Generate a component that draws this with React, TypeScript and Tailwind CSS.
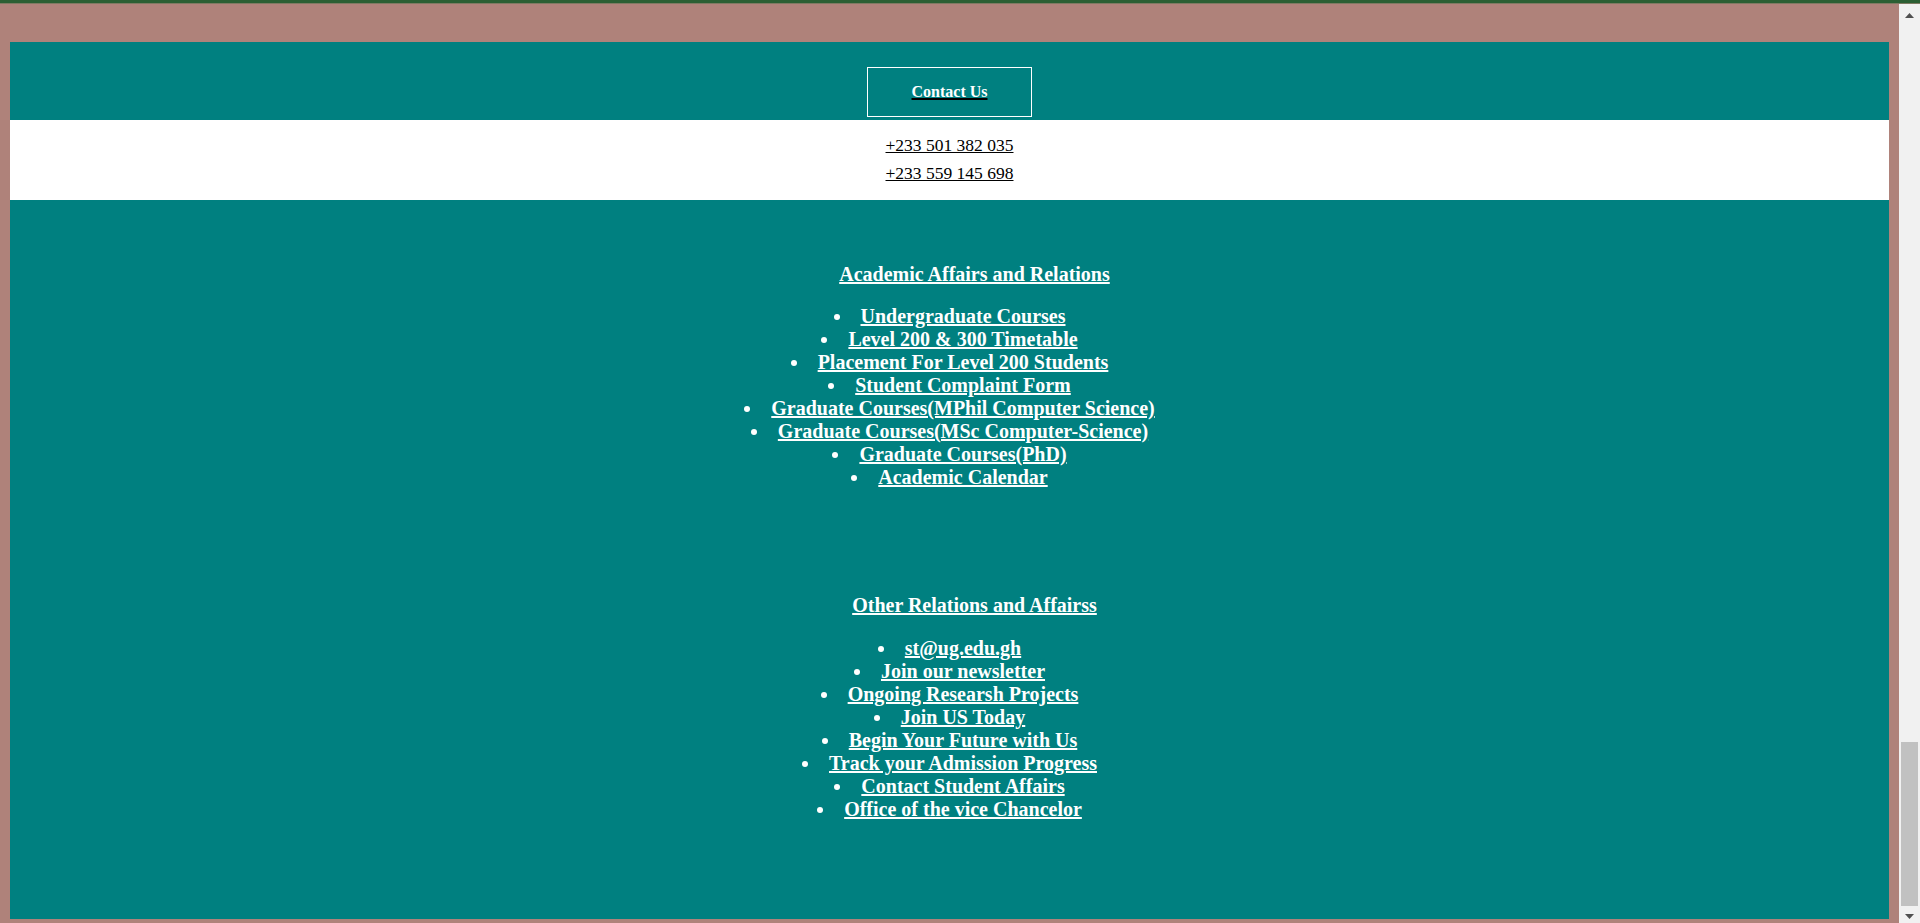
import React from "react";

const academic = [
  "Undergraduate Courses",
  "Level 200 & 300 Timetable",
  "Placement For Level 200 Students",
  "Student Complaint Form",
  "Graduate Courses(MPhil Computer Science)",
  "Graduate Courses(MSc Computer-Science)",
  "Graduate Courses(PhD)",
  "Academic Calendar",
];

const other = [
  "st@ug.edu.gh",
  "Join our newsletter",
  "Ongoing Researsh Projects",
  "Join US Today",
  "Begin Your Future with Us",
  "Track your Admission Progress",
  "Contact Student Affairs",
  "Office of the vice Chancelor",
];

function LinkList({ items }: { items: string[] }) {
  return (
    <ul className="flex flex-col items-center">
      {items.map((t) => (
        <li key={t} className="flex h-[23px] items-center">
          <span className="mr-[21px] h-[6px] w-[6px] rounded-full bg-white" />
          <a
            href="#"
            className="text-[20px] font-bold leading-[23px] text-white underline decoration-white"
          >
            {t}
          </a>
        </li>
      ))}
    </ul>
  );
}

function Heading({ children }: { children: React.ReactNode }) {
  return (
    <div className="flex justify-center pl-[50px]">
      <a
        href="#"
        className="text-[20px] font-bold leading-[23px] text-white underline decoration-white"
      >
        {children}
      </a>
    </div>
  );
}

export default function App() {
  return (
    <div
      className="flex h-[923px] w-[1920px] flex-col overflow-hidden bg-[#af827a]"
      style={{ fontFamily: '"Liberation Serif", "Times New Roman", serif' }}
    >
      <div className="h-[3px] w-full shrink-0 bg-[#2b5f33]" />
      <div className="h-[1px] w-full shrink-0 bg-[#7f7a62]" />
      <div className="flex min-h-0 flex-1">
        <div className="flex flex-1 flex-col pl-[10px] pr-[10px] pt-[38px] pb-[4px]">
          <div className="flex flex-1 flex-col bg-[#008080]">
            {/* Contact header */}
            <div className="flex h-[78px] justify-center pt-[25px]">
              <div className="flex h-[50px] w-[165px] items-center justify-center border border-white">
                <a
                  href="#"
                  className="text-[16px] font-bold leading-[18px] text-white underline decoration-black decoration-2"
                >
                  Contact Us
                </a>
              </div>
            </div>
            {/* Phones */}
            <div className="flex h-[80px] flex-col items-center bg-white pt-[11px]">
              <a
                href="#"
                className="text-[17.5px] leading-[28px] text-black underline decoration-black"
              >
                +233 501 382 035
              </a>
              <a
                href="#"
                className="text-[17.5px] leading-[28px] text-black underline decoration-black"
              >
                +233 559 145 698
              </a>
            </div>
            {/* Links */}
            <div className="flex flex-col pt-[63px]">
              <Heading>Academic Affairs and Relations</Heading>
              <div className="pt-[19px]">
                <LinkList items={academic} />
              </div>
              <div className="pt-[105px]">
                <Heading>Other Relations and Affairss</Heading>
              </div>
              <div className="pt-[20px]">
                <LinkList items={other} />
              </div>
            </div>
          </div>
        </div>
        {/* Scrollbar */}
        <div className="flex w-[21px] shrink-0 flex-col items-center bg-[#f1f1f1] pt-[9px] pb-[4px]">
          <svg width="9" height="5" viewBox="0 0 9 5" className="shrink-0">
            <polygon points="4.5,0 9,5 0,5" fill="#505050" />
          </svg>
          <div className="flex-1" />
          <div className="h-[164px] w-[17px] shrink-0 bg-[#c1c1c1]" />
          <div className="h-[8px] shrink-0" />
          <svg width="9" height="5" viewBox="0 0 9 5" className="shrink-0">
            <polygon points="0,0 9,0 4.5,5" fill="#505050" />
          </svg>
        </div>
      </div>
    </div>
  );
}
